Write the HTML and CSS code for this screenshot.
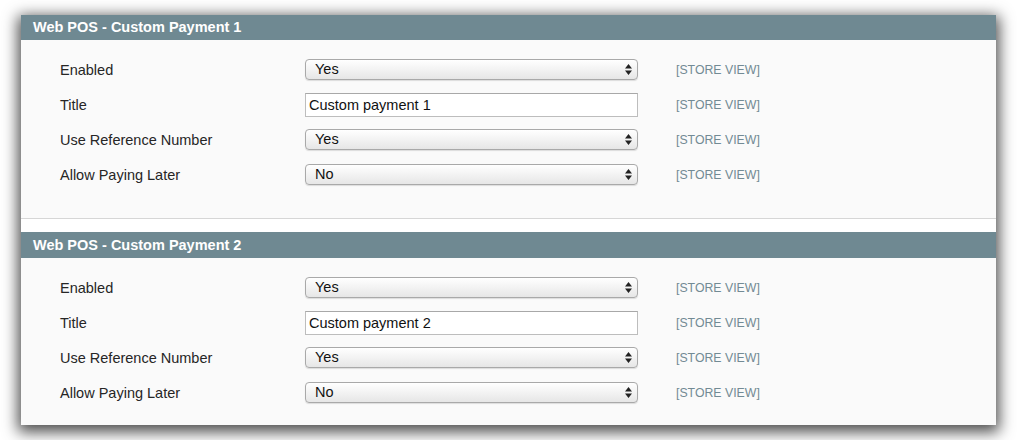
FILE: index.html
```html
<!DOCTYPE html>
<html>
<head>
<meta charset="utf-8">
<link rel="stylesheet" href="styles.css">
</head>
<body>
<div class="window">
  <section class="fieldset">
    <h3 class="head">Web POS - Custom Payment 1</h3>
    <div class="body">
      <div class="row"><label class="label">Enabled</label><div class="control"><select class="sel"><option>Yes</option><option>No</option></select><svg class="arrows" width="7" height="11" viewBox="0 0 7 11"><path d="M3.5 0L7 4.5H0z M3.5 11L0 6.5H7z" fill="#222"/></svg></div><span class="scope">[STORE VIEW]</span></div>
      <div class="row"><label class="label">Title</label><div class="control"><input class="txt" type="text" value="Custom payment 1"></div><span class="scope">[STORE VIEW]</span></div>
      <div class="row"><label class="label">Use Reference Number</label><div class="control"><select class="sel"><option>Yes</option><option>No</option></select><svg class="arrows" width="7" height="11" viewBox="0 0 7 11"><path d="M3.5 0L7 4.5H0z M3.5 11L0 6.5H7z" fill="#222"/></svg></div><span class="scope">[STORE VIEW]</span></div>
      <div class="row"><label class="label">Allow Paying Later</label><div class="control"><select class="sel"><option>No</option><option>Yes</option></select><svg class="arrows" width="7" height="11" viewBox="0 0 7 11"><path d="M3.5 0L7 4.5H0z M3.5 11L0 6.5H7z" fill="#222"/></svg></div><span class="scope">[STORE VIEW]</span></div>
    </div>
  </section>
  <section class="fieldset">
    <h3 class="head">Web POS - Custom Payment 2</h3>
    <div class="body">
      <div class="row"><label class="label">Enabled</label><div class="control"><select class="sel"><option>Yes</option><option>No</option></select><svg class="arrows" width="7" height="11" viewBox="0 0 7 11"><path d="M3.5 0L7 4.5H0z M3.5 11L0 6.5H7z" fill="#222"/></svg></div><span class="scope">[STORE VIEW]</span></div>
      <div class="row"><label class="label">Title</label><div class="control"><input class="txt" type="text" value="Custom payment 2"></div><span class="scope">[STORE VIEW]</span></div>
      <div class="row"><label class="label">Use Reference Number</label><div class="control"><select class="sel"><option>Yes</option><option>No</option></select><svg class="arrows" width="7" height="11" viewBox="0 0 7 11"><path d="M3.5 0L7 4.5H0z M3.5 11L0 6.5H7z" fill="#222"/></svg></div><span class="scope">[STORE VIEW]</span></div>
      <div class="row"><label class="label">Allow Paying Later</label><div class="control"><select class="sel"><option>No</option><option>Yes</option></select><svg class="arrows" width="7" height="11" viewBox="0 0 7 11"><path d="M3.5 0L7 4.5H0z M3.5 11L0 6.5H7z" fill="#222"/></svg></div><span class="scope">[STORE VIEW]</span></div>
    </div>
  </section>
</div>
</body>
</html>
```

FILE: styles.css
```css
html, body {
  margin: 0;
  padding: 0;
  background: #ffffff;
}
body {
  font-family: "Liberation Sans", Arial, sans-serif;
  padding: 15px 0 15px 21px;
}
.window {
  width: 975px;
  height: 410px;
  overflow: hidden;
  background: #ffffff;
  box-shadow: 0 4px 14px 3px rgba(0, 0, 0, 0.7);
}
.fieldset {
  margin: 0 0 13px 0;
}
.head {
  margin: 0;
  height: 25px;
  line-height: 25px;
  padding-left: 12px;
  background: #6f8992;
  color: #ffffff;
  font-size: 14.5px;
  font-weight: bold;
}
.fieldset + .fieldset .head {
  height: 26px;
  line-height: 26px;
}
.body {
  background: #fafafa;
  border-bottom: 1px solid #d6d6d6;
  padding: 12px 0 26px 39px;
}
.row {
  display: flex;
  align-items: center;
  height: 35px;
}
.label {
  width: 245px;
  font-size: 14.5px;
  color: #262626;
}
.control {
  position: relative;
  width: 333px;
  display: flex;
  align-items: center;
}
.sel {
  -webkit-appearance: none;
  appearance: none;
  width: 333px;
  height: 21px;
  margin: 0;
  padding: 0 0 0 9px;
  border: 1px solid #a9a9a9;
  border-radius: 4px;
  background: linear-gradient(#ffffff 0%, #f4f4f4 45%, #e6e6e6 100%);
  box-shadow: 0 1px 1px rgba(0, 0, 0, 0.12);
  font-family: "Liberation Sans", Arial, sans-serif;
  font-size: 14.5px;
  color: #111;
  line-height: 19px;
}
.arrows {
  position: absolute;
  right: 6px;
  top: 5px;
}
.txt {
  box-sizing: border-box;
  width: 333px;
  height: 24px;
  margin: 0;
  padding: 0 0 0 3px;
  border: 1px solid #bdbdbd;
  border-top-color: #a8a8a8;
  background: #ffffff;
  font-family: "Liberation Sans", Arial, sans-serif;
  font-size: 14.5px;
  color: #111;
}
.scope {
  margin-left: 38px;
  font-size: 12.3px;
  color: #728a94;
}
```
